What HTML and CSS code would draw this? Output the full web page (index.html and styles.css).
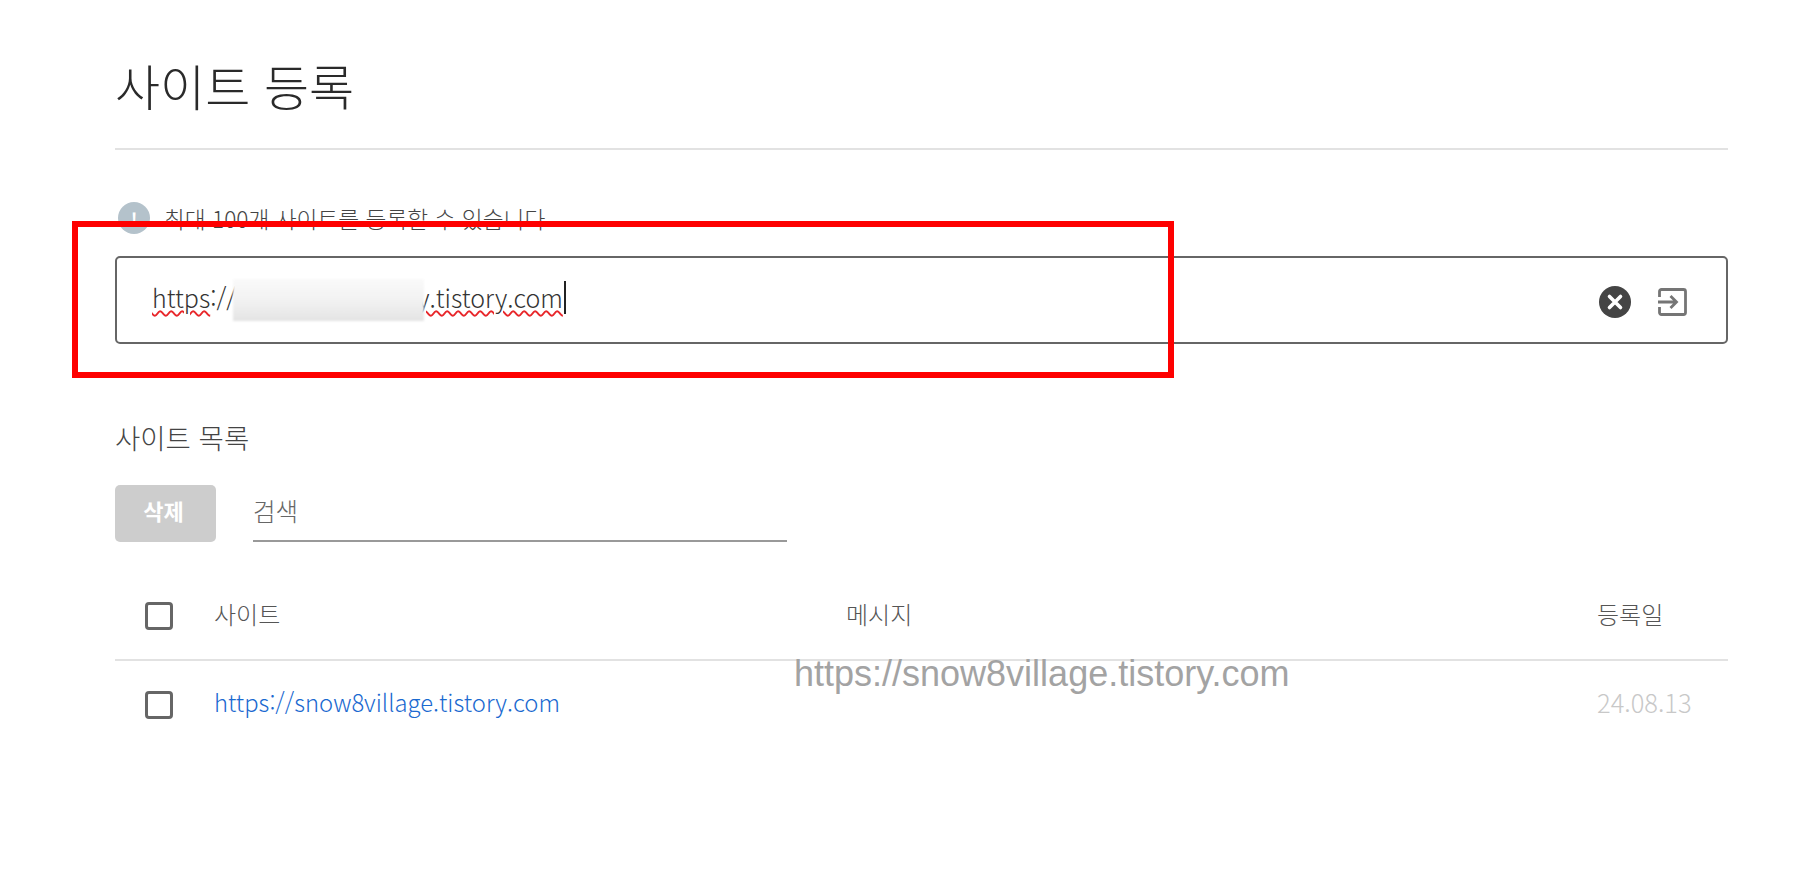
FILE: index.html
```html
<!DOCTYPE html>
<html lang="ko">
<head>
<meta charset="utf-8">
<title>사이트 등록</title>
<link rel="stylesheet" href="styles.css">
</head>
<body>
<main class="page">
  <header class="head"><h1 class="title">사이트 등록</h1></header>
  <p class="info">
    <span class="info-icon">!</span>
    <span>최대 100개 사이트를 등록할 수 있습니다</span>
  </p>
  <div class="url-box">
    <div class="url-text">
      <span class="spell">https</span><span>://</span><span class="blur"></span><span class="spell">y.tistory.com</span><span class="caret"></span>
    </div>
    <div class="url-actions">
      <svg class="clear" width="32" height="32" viewBox="0 0 32 32" aria-hidden="true">
        <circle cx="16" cy="16" r="16" fill="#444"/>
        <path d="M10.5 10.5l11 11M21.5 10.5l-11 11" stroke="#fff" stroke-width="3.6" stroke-linecap="round"/>
      </svg>
      <svg class="submit" width="30" height="28" viewBox="0 0 30 28" fill="none" stroke="#757575" stroke-width="2.8" aria-hidden="true">
        <path d="M2.5 9V3.5a2 2 0 0 1 2-2h22a2 2 0 0 1 2 2v21a2 2 0 0 1-2 2h-22a2 2 0 0 1-2-2V19"/>
        <path d="M1 14h18M13.5 8l6 6-6 6"/>
      </svg>
    </div>
  </div>
  <h2 class="section">사이트 목록</h2>
  <div class="tools">
    <button class="del">삭제</button>
    <div class="search">검색</div>
  </div>
  <div class="row row-head">
    <span class="check"></span>
    <span class="c-site">사이트</span>
    <span class="c-msg">메시지</span>
    <span class="c-date">등록일</span>
  </div>
  <div class="row row-body">
    <span class="check"></span>
    <a class="c-site link">https://snow8village.tistory.com</a>
    <span class="c-msg"></span>
    <span class="c-date date">24.08.13</span>
  </div>
</main>
<div class="annot"></div>
<div class="watermark">https://snow8village.tistory.com</div>
</body>
</html>
```
FILE: styles.css
```css
* { box-sizing: border-box; }
html, body { margin: 0; height: 100%; background: #fff; overflow: hidden; }
body { font-family: "Noto Sans CJK KR", "Noto Sans", sans-serif; color: #444; position: relative; }
.page { width: 1808px; padding: 0 80px 0 115px; }
.head { height: 150px; border-bottom: 2px solid #e2e2e2; padding-top: 52px; }
.title { margin: 0; font-size: 49px; line-height: 66px; font-weight: 300; color: #2a2a2a; }
.info { display: flex; align-items: center; gap: 14px; margin: 52px 0 0 3px; height: 32px; font-size: 22.7px; font-weight: 300; color: #444; }
.info-icon { width: 32px; height: 32px; border-radius: 50%; background: #b4c2cb; color: #fff; font-size: 18px; font-weight: 700; display: flex; align-items: center; justify-content: center; }
.url-box { margin-top: 22px; height: 88px; border: 2px solid #666; border-radius: 5px; display: flex; align-items: center; justify-content: space-between; padding: 0 39px 0 35px; }
.url-text { display: flex; align-items: center; font-size: 25px; font-weight: 300; color: #333; line-height: 36px; padding-bottom: 6px; }
.spell { text-decoration: underline wavy #e8262a 1.5px; text-underline-offset: 2px; }
.blur { display: inline-block; width: 191px; height: 42px; margin: 6px -7px 0 -3px; background: linear-gradient(180deg, #fafafa, #f1f1f1 55%, #e4e4e4); filter: blur(1px); }
.caret { display: inline-block; width: 2px; height: 33px; background: #222; margin-left: 1px; }
.url-actions { display: flex; align-items: center; gap: 26px; padding-top: 4px; }
.clear, .submit { display: block; }
.section { margin: 75px 0 0; font-size: 27.5px; line-height: 36px; font-weight: 300; color: #444; }
.tools { display: flex; align-items: flex-end; margin-top: 30px; gap: 37px; }
.del { width: 101px; height: 57px; border: 0; border-radius: 5px; background: #cdcdcd; color: #fff; font: 700 22px "Noto Sans CJK KR", sans-serif; padding: 0 4px 7px 0; }
.search { width: 534px; height: 57px; border-bottom: 2px solid #999; font-size: 24.5px; font-weight: 300; color: #666; line-height: 52px; }
.row { display: flex; align-items: center; padding-left: 30px; font-size: 24px; font-weight: 300; color: #555; }
.row-head { height: 119px; padding-top: 31px; border-bottom: 2px solid #e2e2e2; }
.row-head .c-site, .row-head .c-msg, .row-head .c-date { padding-bottom: 5px; }
.row-body { height: 88px; }
.check { width: 28px; height: 28px; border: 3px solid #666; border-radius: 4px; flex: none; margin-right: 41px; }
.c-site { width: 632px; flex: none; }
.c-msg { width: 751px; flex: none; }
.c-date { flex: none; }
.link { color: #1a69d0; font-size: 23.8px; padding-bottom: 8px; }
.date { color: #c8c8c8; font-size: 25.5px; padding-bottom: 8px; }
.annot { position: absolute; left: 72px; top: 221px; width: 1102px; height: 157px; border: 6px solid #fe0000; }
.watermark { position: absolute; left: 794px; top: 654px; font: 36px/40px "Liberation Sans", sans-serif; color: #a3a3a3; }
```
